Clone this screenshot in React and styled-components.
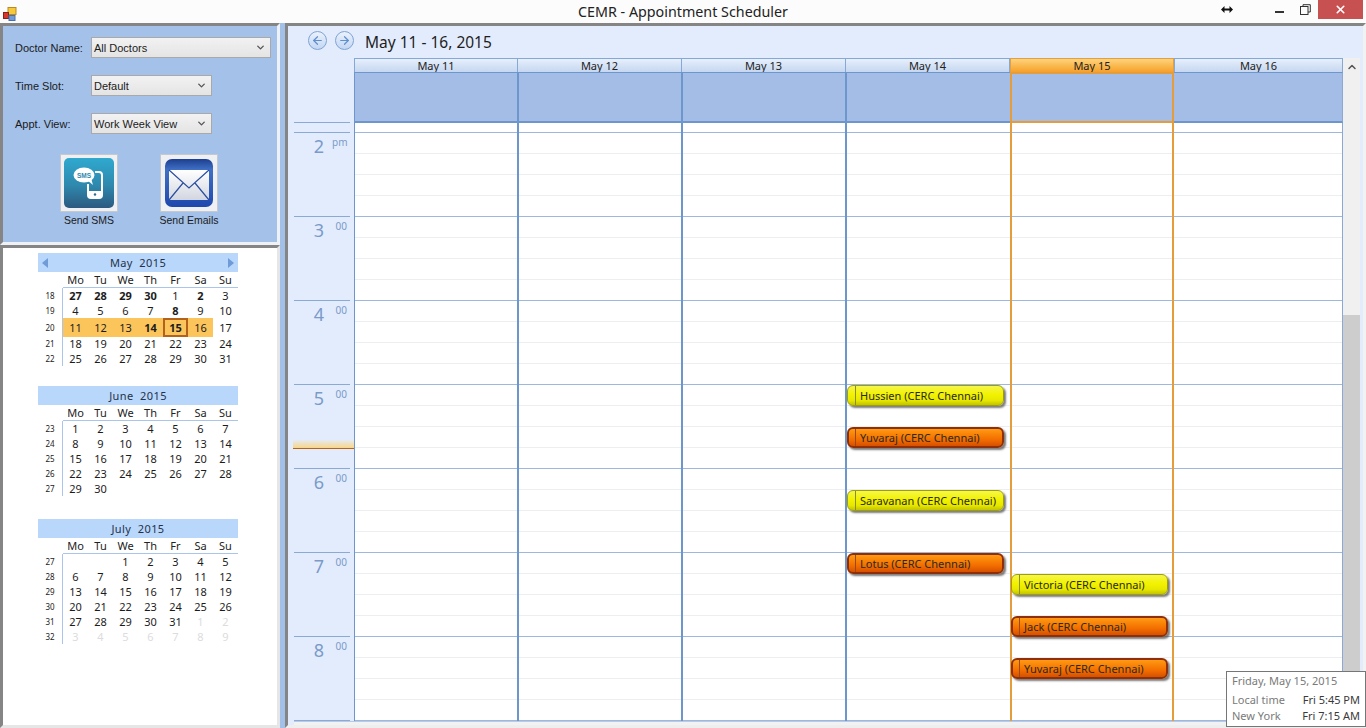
import React from "react";
import styled, { createGlobalStyle } from "styled-components";
import { ArrowLeft, ArrowRight, ChevronDown, ChevronUp, X } from "lucide-react";

const HOURS = ["2", "3", "4", "5", "6", "7", "8"];
const DAYS = ["May 11", "May 12", "May 13", "May 14", "May 15", "May 16"];
const WEEKDAYS = ["Mo", "Tu", "We", "Th", "Fr", "Sa", "Su"];
const ACTIVE_DAY = 4;

const APPOINTMENTS = {
  "May 14": [
    { name: "Hussien (CERC Chennai)", top: 262, tone: "yellow" },
    { name: "Yuvaraj (CERC Chennai)", top: 304, tone: "orange" },
    { name: "Saravanan (CERC Chennai)", top: 367, tone: "yellow" },
    { name: "Lotus (CERC Chennai)", top: 430, tone: "orange" },
  ],
  "May 15": [
    { name: "Victoria (CERC Chennai)", top: 451, tone: "yellow" },
    { name: "Jack (CERC Chennai)", top: 493, tone: "orange" },
    { name: "Yuvaraj (CERC Chennai)", top: 535, tone: "orange" },
  ],
};

const MONTHS = [
  {
    title: "May  2015",
    arrows: true,
    rows: [
      { week: 18, days: ["27", "28", "29", "30", "1", "2", "3"] },
      { week: 19, days: ["4", "5", "6", "7", "8", "9", "10"] },
      { week: 20, days: ["11", "12", "13", "14", "15", "16", "17"], tall: true },
      { week: 21, days: ["18", "19", "20", "21", "22", "23", "24"], height: 16 },
      { week: 22, days: ["25", "26", "27", "28", "29", "30", "31"] },
    ],
    bold: { 18: [0, 1, 2, 3, 5], 19: [4], 20: [3, 4] },
    band: { 20: [0, 1, 2, 3, 4, 5] },
    today: { 20: 4 },
  },
  {
    title: "June  2015",
    rows: [
      { week: 23, days: ["1", "2", "3", "4", "5", "6", "7"] },
      { week: 24, days: ["8", "9", "10", "11", "12", "13", "14"] },
      { week: 25, days: ["15", "16", "17", "18", "19", "20", "21"] },
      { week: 26, days: ["22", "23", "24", "25", "26", "27", "28"] },
      { week: 27, days: ["29", "30", "", "", "", "", ""] },
    ],
  },
  {
    title: "July  2015",
    rows: [
      { week: 27, days: ["", "", "1", "2", "3", "4", "5"] },
      { week: 28, days: ["6", "7", "8", "9", "10", "11", "12"] },
      { week: 29, days: ["13", "14", "15", "16", "17", "18", "19"] },
      { week: 30, days: ["20", "21", "22", "23", "24", "25", "26"] },
      { week: 31, days: ["27", "28", "29", "30", "31", "1", "2"], muted: [5, 6] },
      { week: 32, days: ["3", "4", "5", "6", "7", "8", "9"], muted: [0, 1, 2, 3, 4, 5, 6] },
    ],
  },
];

const AppIcon = () => (
  <svg width="14" height="14" viewBox="0 0 14 14">
    <rect x="5" y="0.5" width="8" height="7" fill="#f6c83c" stroke="#b98a1c" />
    <rect x="0.5" y="5.5" width="5" height="6" fill="#d8362a" stroke="#8a1f18" />
    <rect x="6" y="8.5" width="6" height="5" fill="#6f9ad8" stroke="#4a6fa8" />
  </svg>
);

const SmsIcon = () => (
  <svg width="50" height="50" viewBox="0 0 50 50">
    <defs>
      <linearGradient id="smsBg" x1="0" y1="0" x2="0" y2="1">
        <stop offset="0" stopColor="#2fa9cf" />
        <stop offset="0.55" stopColor="#2f88ad" />
        <stop offset="1" stopColor="#2c5a80" />
      </linearGradient>
    </defs>
    <rect width="50" height="50" rx="5" fill="url(#smsBg)" />
    <path d="M31 14h4a3 3 0 0 1 3 3v20a3 3 0 0 1-3 3H27a3 3 0 0 1-3-3V26" fill="none" stroke="#fff" strokeWidth="2" />
    <rect x="24" y="33" width="14" height="7" rx="1" fill="#fff" />
    <circle cx="31" cy="36.5" r="1.2" fill="#2c6a90" />
    <ellipse cx="20" cy="17" rx="10.5" ry="7.5" fill="#fff" />
    <path d="M23 22l6 5-2-7z" fill="#fff" />
    <text x="20" y="19.5" textAnchor="middle" fontSize="6.5" fontWeight="700" fontFamily="Liberation Sans, sans-serif" fill="#2f88ad">SMS</text>
  </svg>
);

const MailIcon = () => (
  <svg width="50" height="50" viewBox="0 0 50 50">
    <defs>
      <linearGradient id="mailBg" x1="0" y1="0" x2="0" y2="1">
        <stop offset="0" stopColor="#1d3f8f" />
        <stop offset="0.22" stopColor="#3f6fc4" />
        <stop offset="1" stopColor="#1f47ae" />
      </linearGradient>
      <linearGradient id="mailPaper" x1="0" y1="0" x2="0" y2="1">
        <stop offset="0" stopColor="#ffffff" />
        <stop offset="1" stopColor="#d2d6e0" />
      </linearGradient>
    </defs>
    <rect x="1" y="1" width="48" height="48" rx="7" fill="url(#mailBg)" />
    <rect x="5" y="12" width="40" height="30" rx="1" fill="url(#mailPaper)" />
    <path d="M5 12l20 18 20-18M5 42l14-17M45 42L31 25" fill="none" stroke="#2a4f9f" strokeWidth="1.2" />
  </svg>
);

const RestoreIcon = () => (
  <svg width="11" height="11" viewBox="0 0 11 11" fill="none" stroke="#333">
    <rect x="0.5" y="2.5" width="7.5" height="8" strokeWidth="1" />
    <path d="M3 2.5V0.7h7.3V8H8" strokeWidth="1" />
  </svg>
);

const ResizeCursor = () => (
  <svg width="12" height="7" viewBox="0 0 12 7">
    <path d="M0 3.5L3.5 0v2.5h5V0L12 3.5 8.5 7V4.5h-5V7z" fill="#111" />
  </svg>
);

const MonthCalendar = ({ month }) => (
  <Month>
    <MonthTitle>
      {month.arrows && <MonthArrow $side="left" />}
      <span>{month.title}</span>
      {month.arrows && <MonthArrow $side="right" />}
    </MonthTitle>
    <WeekdayRow>
      <span />
      {WEEKDAYS.map((d) => (
        <Weekday key={d}>{d}</Weekday>
      ))}
    </WeekdayRow>
    {month.rows.map((row) => (
      <WeekRow key={row.week} $height={row.tall ? 17 : row.height || 15}>
        <WeekNumber>{row.week}</WeekNumber>
        {row.days.map((day, i) => (
          <DayCell
            key={i}
            $bold={month.bold?.[row.week]?.includes(i)}
            $band={month.band?.[row.week]?.includes(i)}
            $today={month.today?.[row.week] === i}
            $muted={row.muted?.includes(i)}
          >
            {day}
          </DayCell>
        ))}
      </WeekRow>
    ))}
  </Month>
);

const SLOTS = Array.from({ length: 28 }, (_, i) => i);

export default function App() {
  return (
    <>
      <GlobalStyle />
      <Page>
        <TitleBar>
          <TitleLeft>
            <AppIcon />
          </TitleLeft>
          <WindowTitle>CEMR - Appointment Scheduler</WindowTitle>
          <WindowControls>
            <CursorSlot>
              <ResizeCursor />
            </CursorSlot>
            <ControlSlot>
              <MinimizeBar />
            </ControlSlot>
            <ControlSlot>
              <RestoreIcon />
            </ControlSlot>
            <CloseButton>
              <X size={13} strokeWidth={3} color="#fff" />
            </CloseButton>
          </WindowControls>
        </TitleBar>

        <Workspace>
          <Sidebar>
            <FilterPanel>
              <FilterRow>
                <FilterLabel>Doctor Name:</FilterLabel>
                <Combo $width={180}>
                  All Doctors
                  <ChevronDown size={11} strokeWidth={3} color="#555" />
                </Combo>
              </FilterRow>
              <FilterRow>
                <FilterLabel>Time Slot:</FilterLabel>
                <Combo $width={121}>
                  Default
                  <ChevronDown size={11} strokeWidth={3} color="#555" />
                </Combo>
              </FilterRow>
              <FilterRow>
                <FilterLabel>Appt. View:</FilterLabel>
                <Combo $width={121}>
                  Work Week View
                  <ChevronDown size={11} strokeWidth={3} color="#555" />
                </Combo>
              </FilterRow>
              <ActionRow>
                <Action>
                  <ActionButton>
                    <SmsIcon />
                  </ActionButton>
                  <ActionLabel>Send SMS</ActionLabel>
                </Action>
                <Action>
                  <ActionButton>
                    <MailIcon />
                  </ActionButton>
                  <ActionLabel>Send Emails</ActionLabel>
                </Action>
              </ActionRow>
            </FilterPanel>
            <CalendarPanel>
              {MONTHS.map((m) => (
                <MonthCalendar key={m.title} month={m} />
              ))}
            </CalendarPanel>
          </Sidebar>

          <Scheduler>
            <RangeBar>
              <NavButton>
                <ArrowLeft size={13} strokeWidth={2.2} color="#5f8fcd" />
              </NavButton>
              <NavButton>
                <ArrowRight size={13} strokeWidth={2.2} color="#5f8fcd" />
              </NavButton>
              <RangeTitle>May 11 - 16, 2015</RangeTitle>
            </RangeBar>
            <SchedulerBody>
              <Main>
                <HeaderRow>
                  {DAYS.map((d, i) => (
                    <DayHead key={d} $index={i}>
                      <DayName $active={i === ACTIVE_DAY}>{d}</DayName>
                      <AllDay $index={i} />
                    </DayHead>
                  ))}
                </HeaderRow>
                <GridRow>
                  <Gutter>
                    <GutterStub />
                    {HOURS.map((h, i) => (
                      <HourCell key={h}>
                        <HourNumber>{h}</HourNumber>
                        <HourSuffix>{i === 0 ? "pm" : "00"}</HourSuffix>
                      </HourCell>
                    ))}
                    <NowMarker />
                  </Gutter>
                  {DAYS.map((d, i) => (
                    <DayColumn key={d} $index={i}>
                      <FirstSlot />
                      {SLOTS.map((s) => (
                        <Slot key={s} $hourEnd={s % 4 === 3} />
                      ))}
                      {(APPOINTMENTS[d] || []).map((a) => (
                        <Appointment key={a.top} $tone={a.tone} $active={i === ACTIVE_DAY} style={{ top: a.top }}>
                          <ApptGrip $tone={a.tone} />
                          {a.name}
                        </Appointment>
                      ))}
                    </DayColumn>
                  ))}
                </GridRow>
                <BottomStrip />
              </Main>
              <Scrollbar>
                <ScrollUp>
                  <ChevronUp size={12} strokeWidth={3} color="#555" />
                </ScrollUp>
                <ScrollThumb />
              </Scrollbar>
            </SchedulerBody>
            <Tooltip>
              <TooltipHead>Friday, May 15, 2015</TooltipHead>
              <TooltipRow>
                <span>Local time</span>
                <TooltipValue>Fri 5:45 PM</TooltipValue>
              </TooltipRow>
              <TooltipRow>
                <span>New York</span>
                <TooltipValue>Fri 7:15 AM</TooltipValue>
              </TooltipRow>
            </Tooltip>
          </Scheduler>
        </Workspace>
      </Page>
    </>
  );
}

// the day separators sit across the column edge, so middle columns overlap by 1px
const dayColumnBox = ({ $index }) => {
  if ($index === 0 || $index === ACTIVE_DAY) return "width: 164px;";
  if ($index === 5) return "width: 169px;";
  return "width: 165px; margin-left: -1px;";
};

const dayBorders = ({ $index }) => {
  if ($index === 0) return "border-left: 1px solid #6d97cc;";
  if ($index === ACTIVE_DAY) return "border-left: 2px solid #e49d3a; border-right: 2px solid #e49d3a;";
  if ($index === 5) return "border-right: 1px solid #8aa9d4;";
  return "border-left: 2px solid #6d97cc;";
};

const GlobalStyle = createGlobalStyle`
  html, body {
    margin: 0;
    padding: 0;
    overflow: hidden;
  }
  * {
    box-sizing: border-box;
  }
`;

const Page = styled.div`
  width: 1366px;
  height: 728px;
  display: flex;
  flex-direction: column;
  background: #fcfcfc;
  font-family: "Noto Sans", "Open Sans", sans-serif;
  overflow: hidden;
`;

const TitleBar = styled.div`
  height: 23px;
  flex: none;
  display: grid;
  grid-template-columns: 1fr auto 1fr;
  background: #fcfcfc;
`;

const TitleLeft = styled.div`
  padding: 4px 0 0 3px;
`;

const WindowTitle = styled.div`
  font-size: 14.3px;
  line-height: 24px;
  color: #222;
`;

const WindowControls = styled.div`
  display: flex;
  justify-content: flex-end;
  padding-right: 3px;
  height: 19px;
`;

const CursorSlot = styled.div`
  width: 14px;
  margin-right: 32px;
  display: flex;
  align-items: center;
  justify-content: center;
`;

const ControlSlot = styled.div`
  width: 26px;
  display: flex;
  align-items: center;
  justify-content: center;
`;

const MinimizeBar = styled.div`
  width: 9px;
  height: 2px;
  margin-top: 5px;
  background: #333;
`;

const CloseButton = styled.div`
  width: 45px;
  display: flex;
  align-items: center;
  justify-content: center;
  background: #c75050;
`;

const Workspace = styled.div`
  flex: 1;
  display: flex;
  gap: 5px;
  min-height: 0;
  background: #a3c0e8;
`;

const Sidebar = styled.div`
  width: 280px;
  flex: none;
  display: flex;
  flex-direction: column;
`;

const FilterPanel = styled.div`
  height: 222px;
  flex: none;
  padding: 11px 0 0 12px;
  background: #a3c1e9;
  border: 3px solid #858585;
  border-right-color: #eef1f6;
  border-bottom-color: #eef1f6;
  display: flex;
  flex-direction: column;
  gap: 17px;
`;

const FilterRow = styled.div`
  display: flex;
  align-items: center;
  height: 21px;
`;

const FilterLabel = styled.div`
  width: 76px;
  font-family: "Liberation Sans", sans-serif;
  font-size: 11px;
  color: #1b1b1b;
`;

const Combo = styled.div`
  width: ${({ $width }) => $width}px;
  height: 21px;
  padding: 0 4px 0 2px;
  display: flex;
  align-items: center;
  justify-content: space-between;
  font-family: "Liberation Sans", sans-serif;
  font-size: 11px;
  color: #1b1b1b;
  background: linear-gradient(#f2f2f2, #e4e4e4);
  border: 1px solid #a9a9a9;
`;

const ActionRow = styled.div`
  display: flex;
  gap: 20px;
  margin-top: 3px;
  padding-left: 34px;
`;

const Action = styled.div`
  width: 80px;
  display: flex;
  flex-direction: column;
  align-items: center;
`;

const ActionButton = styled.div`
  width: 58px;
  height: 58px;
  display: flex;
  align-items: center;
  justify-content: center;
  background: #eef0f4;
  border: 1px solid #c4c8cf;
`;

const ActionLabel = styled.div`
  margin-top: 1px;
  font-family: "Liberation Sans", sans-serif;
  font-size: 10.5px;
  line-height: 15px;
  color: #1b1b1b;
  white-space: nowrap;
`;

const CalendarPanel = styled.div`
  flex: 1;
  padding: 5px 0 0 35px;
  background: #fff;
  border: 3px solid #858585;
  border-right-color: #e6e6e6;
  border-bottom-color: #e6e6e6;
`;

const Month = styled.div`
  width: 200px;
  height: 133px;
`;

const MonthTitle = styled.div`
  position: relative;
  height: 19px;
  display: flex;
  align-items: center;
  justify-content: center;
  background: #b9d7fb;
  font-size: 11px;
  letter-spacing: 0.4px;
  white-space: pre;
  color: #23324a;
`;

const MonthArrow = styled.div`
  position: absolute;
  top: 5px;
  ${({ $side }) => $side}: 4px;
  width: 0;
  height: 0;
  border-top: 5px solid transparent;
  border-bottom: 5px solid transparent;
  ${({ $side }) =>
    $side === "left"
      ? "border-right: 6px solid #6f9bd8;"
      : "border-left: 6px solid #6f9bd8;"}
`;

const WeekdayRow = styled.div`
  display: grid;
  grid-template-columns: 25px repeat(7, 25px);
  height: 16px;
  align-items: center;
`;

const Weekday = styled.div`
  height: 16px;
  line-height: 15px;
  text-align: center;
  font-size: 11px;
  color: #222;
  border-bottom: 1px solid #a9c6ea;
`;

const WeekRow = styled.div`
  display: grid;
  grid-template-columns: 25px repeat(7, 25px);
  height: ${({ $height }) => $height}px;
`;

const WeekNumber = styled.div`
  display: flex;
  align-items: center;
  justify-content: center;
  font-size: 8px;
  color: #222;
  border-right: 1px solid #a9c6ea;
`;

const DayCell = styled.div`
  display: flex;
  align-items: center;
  justify-content: center;
  font-size: 11px;
  font-weight: ${({ $bold }) => ($bold ? 700 : 400)};
  color: ${({ $muted }) => ($muted ? "#dcdcdc" : "#1c1c1c")};
  background: ${({ $band }) => ($band ? "#fbc55c" : "transparent")};
  border: ${({ $today }) => ($today ? "2px solid #b3621b" : "none")};
`;

const Scheduler = styled.div`
  position: relative;
  flex: 1;
  min-width: 0;
  display: flex;
  flex-direction: column;
  background: #e3ecfc;
  border: 3px solid #858585;
  border-right-color: #f2f2f2;
  border-bottom-color: #eeeeee;
`;

const RangeBar = styled.div`
  height: 32px;
  flex: none;
  display: flex;
  align-items: center;
  gap: 8px;
  padding: 0 0 3px 20px;
`;

const NavButton = styled.div`
  width: 19px;
  height: 19px;
  border-radius: 50%;
  display: flex;
  align-items: center;
  justify-content: center;
  background: linear-gradient(#eaf1fc, #c3d7f3);
  border: 1px solid #7fa3d4;
`;

const RangeTitle = styled.div`
  margin: 2px 0 0 3px;
  font-size: 15.5px;
  color: #1e1e1e;
`;

const SchedulerBody = styled.div`
  flex: 1;
  display: flex;
  min-height: 0;
  padding-right: 3px;
`;

const Main = styled.div`
  width: 1055px;
  flex: none;
  padding-left: 6px;
  display: flex;
  flex-direction: column;
`;

const HeaderRow = styled.div`
  display: flex;
  padding-left: 60px;
  height: 65px;
  flex: none;
`;

const DayHead = styled.div`
  ${dayColumnBox}
  flex: none;
  display: flex;
  flex-direction: column;
`;

const DayName = styled.div`
  height: 14px;
  line-height: 14px;
  text-align: center;
  font-size: 11px;
  color: #222;
  background: ${({ $active }) =>
    $active
      ? "linear-gradient(#fed27e, #f9b040 70%, #f6a02e)"
      : "linear-gradient(#e6effc, #c6d7f0)"};
  border: 1px solid ${({ $active }) => ($active ? "#e2a040" : "#85a8d4")};
  border-bottom: none;
`;

const AllDay = styled.div`
  flex: 1;
  background: #a3bde6;
  border-top: 1px solid #6d97cc;
  border-bottom: 2px solid #6d97cc;
  ${dayBorders}
  ${({ $index }) => $index === ACTIVE_DAY && "border: 2px solid #e49d3a;"}
`;

const GridRow = styled.div`
  display: flex;
  height: 598px;
  flex: none;
`;

const Gutter = styled.div`
  position: relative;
  width: 60px;
  flex: none;
`;

const GutterStub = styled.div`
  height: 10px;
  margin-right: 4px;
  border-bottom: 1px solid #8aa9d4;
  box-shadow: 0 -1px 0 #8aa9d4;
`;

const HourCell = styled.div`
  height: 84px;
  margin-right: 4px;
  display: flex;
  justify-content: flex-end;
  padding-right: 3px;
  border-bottom: 1px solid #8aa9d4;
`;

const HourNumber = styled.div`
  font-size: 18px;
  line-height: 26px;
  margin-right: 8px;
  color: #7a9bca;
`;

const HourSuffix = styled.div`
  width: 15px;
  font-size: 10px;
  line-height: 18px;
  text-align: right;
  color: #7a9bca;
`;

const NowMarker = styled.div`
  position: absolute;
  left: -1px;
  right: 0;
  top: 317px;
  height: 9px;
  background: linear-gradient(rgba(248, 214, 136, 0.1), #f8d688);
  border-bottom: 1px solid #b2661b;
`;

const DayColumn = styled.div`
  position: relative;
  ${dayColumnBox}
  ${dayBorders}
  flex: none;
  background: #fff;
`;

const FirstSlot = styled.div`
  height: 10px;
  border-bottom: 1px solid #9db8dc;
`;

const Slot = styled.div`
  height: 21px;
  border-bottom: 1px solid ${({ $hourEnd }) => ($hourEnd ? "#9db8dc" : "#eceef2")};
`;

const Appointment = styled.div`
  position: absolute;
  left: ${({ $active }) => ($active ? "-1px" : "0")};
  width: 157px;
  height: 21px;
  display: flex;
  align-items: center;
  font-size: 11px;
  white-space: nowrap;
  color: #2a2a1a;
  border-radius: 6px;
  box-shadow: 2px 2px 2px rgba(70, 70, 70, 0.7);
  ${({ $tone }) =>
    $tone === "yellow"
      ? `background: linear-gradient(#f6f64a, #f2f200 45%, #e8e800 75%, #c4c400);
         border: 1px solid #9d9d10;
         padding-left: 3px;`
      : `background: linear-gradient(#ff9a12, #f46f00 60%, #d65000);
         border: 2px solid #8f2f08;
         padding-left: 2px;`}
`;

const ApptGrip = styled.span`
  align-self: stretch;
  width: 1px;
  margin: 0 4px;
  background: ${({ $tone }) => ($tone === "yellow" ? "#8d8d20" : "#9a4a10")};
`;

const BottomStrip = styled.div`
  flex: 1;
  background: #f2f2f2;
  border-top: 1px solid #b7cbe6;
`;

const Scrollbar = styled.div`
  width: 17px;
  flex: none;
  display: flex;
  flex-direction: column;
  background: #f0f0f0;
`;

const ScrollUp = styled.div`
  height: 17px;
  display: flex;
  align-items: center;
  justify-content: center;
`;

const ScrollThumb = styled.div`
  margin-top: 240px;
  flex: 1;
  background: #cdcdcd;
`;

const Tooltip = styled.div`
  position: absolute;
  right: -3px;
  bottom: -2px;
  width: 140px;
  height: 56px;
  padding: 0 5px;
  background: #fff;
  border: 1px solid #767676;
  font-size: 11px;
  color: #7a7a7a;
`;

const TooltipHead = styled.div`
  height: 20px;
  line-height: 17px;
`;

const TooltipRow = styled.div`
  display: flex;
  justify-content: space-between;
  height: 16px;
  line-height: 16px;
`;

const TooltipValue = styled.span`
  color: #3a3a3a;
`;
